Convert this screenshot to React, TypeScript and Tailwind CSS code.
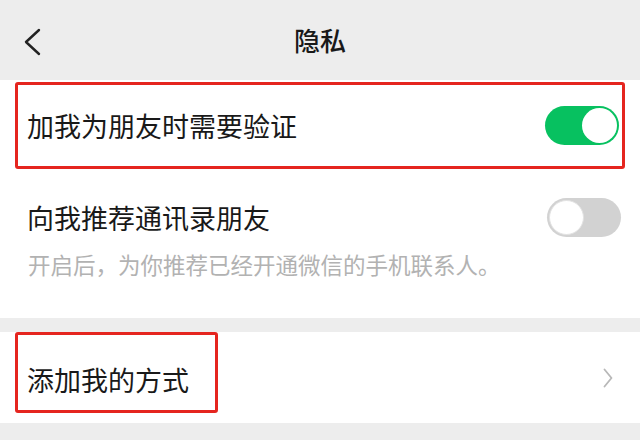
import React from "react";

const font = { fontFamily: '"Noto Sans CJK SC", "Noto Sans", sans-serif' };

function Toggle({ on }: { on: boolean }) {
    return (
        <div
            className={`w-[74px] h-[39px] rounded-full flex items-center px-[2px] ${
                on ? "bg-[#07c160] justify-end" : "bg-[#d2d2d2] justify-start"
            }`}
        >
            <div className={`w-[35px] h-[35px] rounded-full bg-white ${on ? "" : "border border-[#e2e2e2]"}`} />
        </div>
    );
}

export default function App() {
    return (
        <div className="w-[640px] h-[440px] bg-[#ededed] flex flex-col overflow-hidden" style={font}>
            {/* Header */}
            <div className="h-[80px] flex items-center relative shrink-0">
                <svg className="absolute left-[22px] top-[28px]" width="20" height="28" viewBox="0 0 20 28" fill="none">
                    <path d="M17 2 L4 14 L17 26" stroke="#222" strokeWidth="2.4" strokeLinecap="round" strokeLinejoin="round" />
                </svg>
                <div className="flex-1 text-center text-[26px] font-medium text-[#191919] leading-none">隐私</div>
            </div>

            {/* Section 1 */}
            <div className="bg-white pt-[2px] shrink-0">
                <div className="mx-[15px] h-[87px] border-[3px] border-[#e5251f] rounded-[3px] flex items-center justify-between pl-[9px] pr-[3px]">
                    <span className="text-[27px] text-[#191919] leading-none">加我为朋友时需要验证</span>
                    <Toggle on />
                </div>
                <div className="h-[149px] pl-[27px] pr-[19px] flex flex-col">
                    <div className="flex items-center justify-between mt-[29px]">
                        <span className="text-[27px] text-[#191919] leading-none">向我推荐通讯录朋友</span>
                        <Toggle on={false} />
                    </div>
                    <div className="text-[22.5px] text-[#b2b2b2] leading-none mt-[16px] ml-[1px]">
                        开启后，为你推荐已经开通微信的手机联系人。
                    </div>
                </div>
            </div>

            <div className="h-[14px] shrink-0" />

            {/* Section 2 */}
            <div className="bg-white h-[91px] flex items-start justify-between shrink-0">
                <div className="ml-[15px] w-[203px] h-[81px] border-[3px] border-[#e5251f] rounded-[3px] flex items-center pl-[9px] pt-[13px]">
                    <span className="text-[27px] text-[#191919] leading-none">添加我的方式</span>
                </div>
                <svg className="mr-[27px] mt-[36px]" width="10" height="20" viewBox="0 0 10 20" fill="none">
                    <path d="M1.5 1.5 L8.5 10 L1.5 18.5" stroke="#b8b8b8" strokeWidth="1.8" strokeLinecap="round" strokeLinejoin="round" />
                </svg>
            </div>
        </div>
    );
}
